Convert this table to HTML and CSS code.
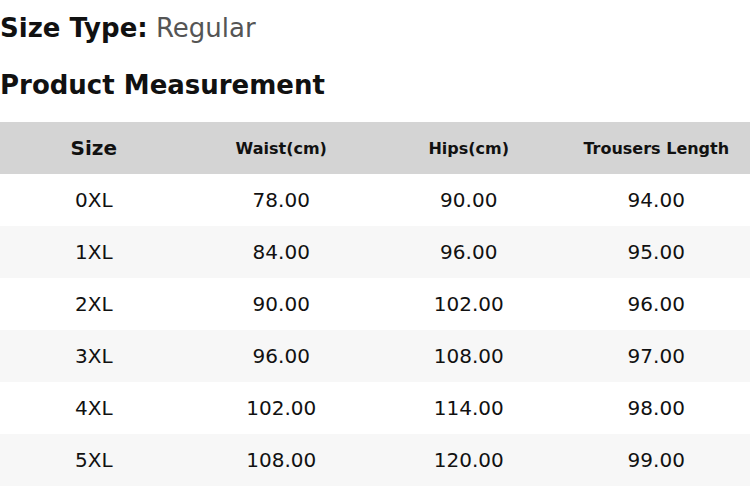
FILE: index.html
```html
<!DOCTYPE html>
<html>
<head>
<meta charset="utf-8">
<link rel="stylesheet" href="styles.css">
</head>
<body>
<div class="page">
  <h2 class="size-type"><span class="label">Size Type:</span> <span class="value">Regular</span></h2>
  <h3 class="section-title">Product Measurement</h3>
  <table class="chart">
    <thead>
      <tr>
        <th class="big">Size</th>
        <th>Waist(cm)</th>
        <th>Hips(cm)</th>
        <th>Trousers Length</th>
      </tr>
    </thead>
    <tbody>
      <tr><td>0XL</td><td>78.00</td><td>90.00</td><td>94.00</td></tr>
      <tr><td>1XL</td><td>84.00</td><td>96.00</td><td>95.00</td></tr>
      <tr><td>2XL</td><td>90.00</td><td>102.00</td><td>96.00</td></tr>
      <tr><td>3XL</td><td>96.00</td><td>108.00</td><td>97.00</td></tr>
      <tr><td>4XL</td><td>102.00</td><td>114.00</td><td>98.00</td></tr>
      <tr><td>5XL</td><td>108.00</td><td>120.00</td><td>99.00</td></tr>
    </tbody>
  </table>
</div>
</body>
</html>
```

FILE: styles.css
```css
html, body {
  margin: 0;
  padding: 0;
  background: #ffffff;
}
body {
  font-family: "DejaVu Sans", sans-serif;
  color: #111111;
}
.page {
  width: 750px;
}
.size-type {
  margin: 0;
  padding-top: 12px;
  font-size: 26px;
  line-height: 32px;
  font-weight: normal;
}
.size-type .label {
  font-weight: bold;
  color: #111111;
}
.size-type .value {
  color: #555555;
}
.section-title {
  margin: 26px 0 0 0;
  font-size: 26px;
  line-height: 30px;
  font-weight: bold;
}
.chart {
  margin-top: 22px;
  width: 750px;
  border-collapse: collapse;
  table-layout: fixed;
}
.chart th {
  background: #d4d4d4;
  height: 52px;
  padding: 0;
  font-size: 16px;
  font-weight: bold;
  text-align: center;
}
.chart th.big {
  font-size: 20px;
}
.chart td {
  height: 52px;
  padding: 0;
  font-size: 20px;
  text-align: center;
}
.chart tbody tr:nth-child(even) td {
  background: #f7f7f7;
}
```
